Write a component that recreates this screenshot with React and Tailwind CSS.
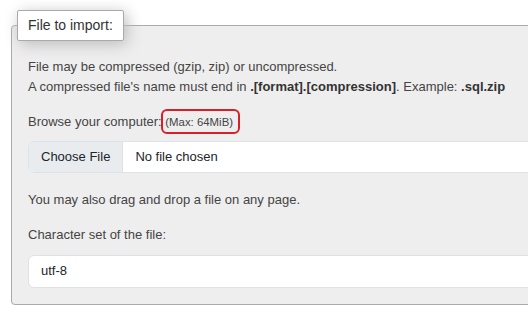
import React from 'react';

export default function App() {
    return (
        <div className="w-[528px] h-[314px] overflow-hidden bg-white pl-[11px] pt-[10px] font-['Liberation_Sans',Arial,sans-serif] text-[13px] leading-[1.5] text-[#444]">
            <fieldset className="w-[600px] p-0 border border-[#aaa] rounded-[4px] bg-[#eeeeee]">
                <legend className="ml-[5px] px-[10px] py-[4px] bg-white border border-[#aaa] rounded-[2px] text-[14px] text-[#333] shadow-[3px_3px_15px_#bbb]">
                    File to import:
                </legend>

                <div className="px-4 pt-4 pb-4">
                    <p className="mb-4">
                        File may be compressed (gzip, zip) or uncompressed.
                        <br />
                        A compressed file's name must end in <b className="text-[#333]">.[format].[compression]</b>. Example: <b className="text-[#333]">.sql.zip</b>
                    </p>

                    <label className="block mb-[9px]">
                        Browse your computer:{' '}
                        <span className="relative text-[11.4px]">
                            (Max: 64MiB)
                            <span className="absolute left-[-4px] right-[-7px] top-[-7px] bottom-[-6px] border-2 border-[#d9202a] rounded-[6px]"></span>
                        </span>
                    </label>

                    <div className="flex h-[32px] w-[540px] border border-[#dee2e6] rounded-[6px] bg-white overflow-hidden text-[#212529]">
                        <span className="flex items-center px-3 bg-[#e9ecef] border-r border-[#dee2e6]">Choose File</span>
                        <span className="flex items-center px-3">No file chosen</span>
                    </div>

                    <p className="mt-[17px] mb-4">You may also drag and drop a file on any page.</p>

                    <label className="block mb-[10px]">Character set of the file:</label>
                    <div className="flex items-center h-[33px] w-[540px] px-3 border border-[#dee2e6] rounded-[6px] bg-white text-[#212529]">
                        utf-8
                    </div>
                </div>
            </fieldset>
        </div>
    );
}
